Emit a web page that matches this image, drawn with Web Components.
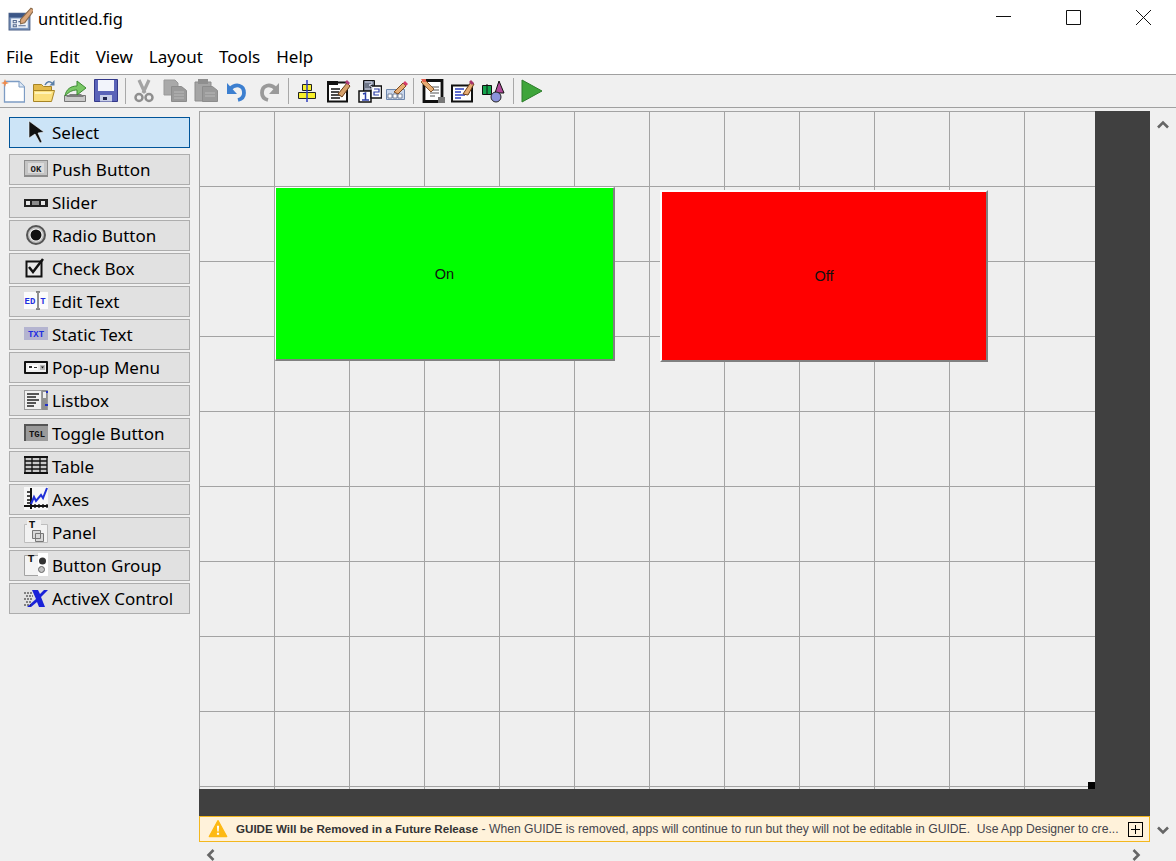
<!DOCTYPE html>
<html>
<head>
<meta charset="utf-8">
<title>untitled.fig</title>
<style>
  html, body { margin: 0; height: 100%; overflow: hidden; background: #f0f0f0; }
</style>
</head>
<body>
<guide-app></guide-app>

<script>
// every icon is a 24x24 svg body, drawn from the zoomed reference
const ICONS = {
  // toolbar
  new: `<path d="M3.500 2.500H18l5.500 5.500v15H3.500z" fill="#fff" stroke="#7d9cc4" stroke-width="1.300"/><path d="M18 2.500V8h5.500" fill="#dfe9f5" stroke="#7d9cc4"/><path d="M4 0l1 3 3 1-3 1-1 3-1-3-3-1 3-1z" fill="#f08a4b"/>`,
  open: `<path d="M1.500 5.500h8l2 2h8v5h-18z" fill="#e3b94a" stroke="#a78425"/><path d="M1.500 22.500V11.500h21l-3 11z" fill="#fbdf7c" stroke="#a78425"/><path d="M3 13h17l-1 2H3z" fill="#fff3b8"/><path d="M13 6c2-4 5-4 7-2" fill="none" stroke="#5a7fa8" stroke-width="1.500"/><path d="M22.500 1v5.500h-5z" fill="#5a7fa8"/>`,
  export: `<path d="M1.500 16.500h21v6h-21z" fill="#c9c9c9" stroke="#777"/><path d="M3 18l4-3h11l3 3z" fill="#7d7d7d"/><path d="M2 17c1-7 6-10 12-10V2l9 7-9 7v-5c-5 0-8 2-12 6z" fill="#79c765" stroke="#3d8a33"/>`,
  save: `<path d="M.5.500h23v22H.5z" fill="#5a63b8" stroke="#33388a"/><path d="M4 1h16v11H4z" fill="#f2f4fb"/><path d="M6 16h12v6.500H6z" fill="#c9cfe8"/><path d="M9 18h4v3H9z" fill="#22264f"/>`,
  cut: `<path d="M7 1l6 13M17 1l-6 13" stroke="#a3a3a3" stroke-width="3.200" fill="none"/><circle cx="7" cy="18.500" r="3.500" fill="none" stroke="#8f8f8f" stroke-width="2.500"/><circle cx="17" cy="18.500" r="3.500" fill="none" stroke="#8f8f8f" stroke-width="2.500"/>`,
  copy: `<path d="M1 1h11l3 3v12H1z" fill="#a9a9a9" stroke="#999"/><path d="M8.500 7.500h10l5 4v11h-15z" fill="#9a9a9a" stroke="#8c8c8c"/><path d="M11 13h10M11 16h10M11 19h10" stroke="#b9b9b9"/>`,
  paste: `<path d="M1 3h16v19H1z" fill="#a5a5a5" stroke="#8c8c8c"/><path d="M4 0h10v5H4z" fill="#8f8f8f"/><path d="M8.500 7.500h10l5 4v11h-15z" fill="#9a9a9a" stroke="#8c8c8c"/><path d="M11 14h10M11 17h10" stroke="#b9b9b9"/>`,
  undo: `<path d="M5 10c6-6 14-4 14 4 0 3-2 6-6 7" fill="none" stroke="#3c7fd0" stroke-width="3.800"/><path d="M2 4v11h10z" fill="#3c7fd0"/>`,
  redo: `<path d="M19 10c-6-6-14-4-14 4 0 3 2 6 6 7" fill="none" stroke="#9a9a9a" stroke-width="3.800"/><path d="M22 4v11H12z" fill="#9a9a9a"/>`,
  align: `<path d="M7.500 5.500h9v6h-9zM3.500 13.500h17v6h-17z" fill="#f7ef2a" stroke="#222"/><path d="M12 1v22" stroke="#2f3fc0" stroke-width="1.500"/>`,
  menued: `<path d="M1 3.500h19v19H1z" fill="#fff" stroke="#111" stroke-width="2"/><path d="M0 2h11v4H0z" fill="#111"/><path d="M4 10h9M4 13h8M4 16h12M4 19h9" stroke="#111" stroke-width="1.300"/><path d="M11 15l9-11 3 3-8 11z" fill="#d7a26c" stroke="#6b3d16"/><path d="M20 1l3 3-2 2-3-3z" fill="#b03a7a"/>`,
  taborder: `<path d="M5.500 1.500h11v11h-11z" fill="#6e7687" stroke="#111"/><path d="M1 12h12v11H1z" fill="#fff" stroke="#111" stroke-width="1.500"/><path d="M13 7h10.500v12H13z" fill="#fff" stroke="#111" stroke-width="1.500"/><path d="M7 3h7v2l-3 1 3 2v2H7" fill="none" stroke="#d8dcf0"/><path d="M5 15l2.500-1v7M4 21h7" fill="none" stroke="#2c3fa8" stroke-width="1.500"/><path d="M16 10h5v3h-5v3h5" fill="none" stroke="#2c3fa8" stroke-width="1.200"/>`,
  tooled: `<path d="M1.500 10.500h18v10h-18z" fill="#c9d6ea" stroke="#6f88ad"/><path d="M3 15h4v4H3zM8 15h4v4H8zM13 15h4v4h-4z" fill="#fff" stroke="#4d5e7c" stroke-width=".7"/><path d="M9 13L18 4l3 3-8 8z" fill="#e6ac73" stroke="#7b4a1c"/><path d="M18 4l2-2 3 3-2 2z" fill="#d83a6c"/>`,
  mfile: `<path d="M3 1.500h18v21H3z" fill="#fff" stroke="#111" stroke-width="2.800"/><path d="M9 8h9M9 11h9M9 14h9M9 17h5" stroke="#555"/><path d="M0 3l3-3 10 10-3 3z" fill="#e6ac73" stroke="#8a5a2b"/><path d="M0 0h5v3H2z" fill="#e5614e"/><path d="M17 18h7v6h-7z" fill="#777"/>`,
  propins: `<path d="M1 6.500h20v16H1z" fill="#fff" stroke="#111" stroke-width="2"/><path d="M4 10h9M4 13h6M4 16h10M4 19h6" stroke="#2c3fc0" stroke-width="1.500"/><path d="M12 15l8-12 3 2-6 11z" fill="#e6ac73" stroke="#6b3d16"/><path d="M20 1l3 3-2 2-3-3z" fill="#a8356c"/>`,
  objbrowse: `<path d="M1.500 6.500h9v9h-9z" fill="#14a44c" stroke="#111"/><path d="M6 5v11" stroke="#111"/><path d="M18 2l5 12h-9z" fill="#b04a9a" stroke="#111"/><circle cx="15" cy="18" r="5" fill="#8b93dc" stroke="#222"/>`,
  run: `<path d="M2 1l20 11L2 23z" fill="#3ea53a" stroke="#2c7d2a"/>`,

  // palette
  select: `<path d="M5 1v17l6-4 5 9 2-1-4-9 6-1z" fill="#111" stroke="#f4f8fc" stroke-width=".6"/>`,
  push: `<path d="M0 3h24v17H0z" fill="#8c8c8c"/><path d="M1 4h22v14H1z" fill="#c4c4c4"/><path d="M4 6h16v10H4z" fill="#dcdcdc"/><text x="12" y="14.500" class="gl" fill="#222">OK</text>`,
  slider: `<path d="M0 9h24v8H0z" fill="#222"/><path d="M2 11h4v4H2zM17 11h4v4h-4z" fill="#e8e8e8"/><path d="M8 11h7v4H8z" fill="#8c8c8c"/>`,
  radio: `<circle cx="12" cy="12" r="9" fill="#bdbdbd" stroke="#555" stroke-width="2"/><circle cx="12" cy="12" r="6.500" fill="#fff"/><circle cx="12" cy="12" r="5.500" fill="#111"/>`,
  check: `<path d="M2.500 5.500h15v15h-15z" fill="#e8e8e8" stroke="#111" stroke-width="2"/><path d="M5 11l4 5 10-13" fill="none" stroke="#111" stroke-width="2.500"/>`,
  edit: `<path d="M0 3h24v17H0z" fill="#fbfbfb"/><text x="6" y="15" class="gl" fill="#1f2fe0">ED</text><text x="19" y="15" class="gl" fill="#1f2fe0">T</text><path d="M14 4v15M12 3h4M12 20h4" stroke="#222"/>`,
  static: `<path d="M0 5h24v13H0z" fill="#b4b4d0"/><text x="12" y="15" class="gl" fill="#1f2fe0">TXT</text>`,
  popup: `<path d="M1 7h22v11H1z" fill="#efefef" stroke="#111" stroke-width="2" stroke-linejoin="round"/><path d="M4 10h10v5H4z" fill="#fff"/><path d="M5 11h3v2H5zM10 12h3v1h-3z" fill="#333"/><path d="M16 10h5v5h-5z" fill="#bbb"/><path d="M17 11.500h3l-1.500 2z" fill="#111"/>`,
  listbox: `<path d="M0 2h24v20H0z" fill="#9c9c9c"/><path d="M1 3h16v18H1z" fill="#f1f1f1"/><path d="M3 6h12M3 9h9M3 12h12M3 15h9M3 18h7" stroke="#222" stroke-width="1.500"/><path d="M18 2h5v20h-5z" fill="#8f8f8f"/><path d="M19 4h3v6h-3z" fill="#eee"/><path d="M22 3h2v2h-2zM21 16h3v2h-3z" fill="#2030c8"/>`,
  toggle: `<path d="M0 3h24v17H0z" fill="#555"/><path d="M2 5h22v15H2z" fill="#9a9a9a"/><text x="13" y="15.500" class="gl" fill="#111">TGL</text>`,
  table: `<path d="M.5 2.500h23v16H.5z" fill="#c9c9c9"/><path d="M1 3h22v16H1zM1 7h22M1 11h22M1 15h22M8 3v16M16 3v16" fill="none" stroke="#111" stroke-width="1.300"/><path d="M0 2h24v2H0zM0 18h24v2H0z" fill="#111"/>`,
  axes: `<path d="M0 0h24v23H0z" fill="#f7f7f7"/><path d="M3 5h5M3 9h5M3 13h5M3 16h5M11 17v4M15 17v4M19 17v4M23 17v4" stroke="#111" stroke-width="1.300" fill="none"/><path d="M6 1h2v21H6zM0 18h24v2H0z" fill="#111"/><path d="M7 17l3-7 2 4 5-6 2 3 4-10" fill="none" stroke="#2030d8" stroke-width="2"/>`,
  panel: `<path d="M.5 4.500h23v18H.5z" fill="#f2f2f2" stroke="#bdbdbd"/><path d="M3 0h14v8H3z" fill="#f0f0f0"/><text x="8" y="8" class="gl big" fill="#111">T</text><path d="M8.500 10.500h8v8h-8zM11.500 13.500h8v8h-8z" fill="#d8d8d8" stroke="#777"/>`,
  group: `<path d="M.5 2.500h23v20H.5z" fill="#f4f4f4" stroke="#a3a3a3"/><path d="M14 0h10v23H14z" fill="#fff"/><text x="7" y="9" class="gl big" fill="#111">T</text><circle cx="18.500" cy="8" r="3.500" fill="#333"/><circle cx="17.500" cy="16.500" r="3" fill="#c4c4c4" stroke="#666"/>`,
  activex: `<path d="M8 4h6l2 4 4-4h4l-7 7 4 10h-6l-2-5-6 5H3l9-8z" fill="#1a22d8"/><path d="M0 7h8M2 10h7M0 13h8M2 16h6M0 19h7" stroke="#222" stroke-dasharray="2 1"/>`,

  // warning triangle and the title bar picture
  warn: `<path d="M12 2l10.500 19h-21z" fill="#fdb913" stroke="#fdb913" stroke-linejoin="round" stroke-width="1.500"/><path d="M10.700 8h2.600l-.5 7h-1.600zM10.700 16.500h2.600v2.500h-2.600z" fill="#fff"/>`,
  figure: `<path d="M1 7h20v16H1z" fill="#7c97bf" stroke="#4a5f85"/><path d="M3 12h16v9H3z" fill="#eef2f8"/><path d="M5 14h3v2H5zM5 18h3v2H5zM10 15h7M10 19h7" stroke="#54698f" fill="none"/><path d="M1 7h20v4H1z" fill="#3c5787"/><path d="M12 13L22 2l3 2-9 12-4 1z" fill="#d9a57a" stroke="#8a6a4a"/>`
};

function svgIcon(name, w = 24, h = 24) {
  return `<svg width="${w}" height="${h}" viewBox="0 0 24 24" aria-hidden="true">
    <style>.gl{font:bold 9px "Liberation Mono",monospace;text-anchor:middle}.big{font-size:11px}</style>
    ${ICONS[name]}</svg>`;
}

class TitleBar extends HTMLElement {
  constructor() {
    super();
    this.attachShadow({ mode: 'open' });
  }
  connectedCallback() {
    this.shadowRoot.innerHTML = `
    <style>
      :host { display: flex; align-items: center; height: 39px; background: #fff; color: #000;
              font: 16.500px "Noto Sans", sans-serif; }
      .pic { margin-left: 8px; width: 25px; height: 25px; margin-top: -3px; }
      .name { margin-left: 5px; margin-top: -2px; }
      .ctl { margin-left: auto; display: flex; gap: 55px; padding-right: 25px; margin-top: -4px; }
      .ctl svg { display: block; }
    </style>
    <span class="pic">${svgIcon('figure', 25, 25)}</span>
    <span class="name"><slot></slot></span>
    <div class="ctl">
      <svg width="15" height="15"><path d="M0 6.500h15" stroke="#111"/></svg>
      <svg width="15" height="15"><path d="M.5.500h14v14H.5z" fill="none" stroke="#111"/></svg>
      <svg width="15" height="15"><path d="M0 0l15 15M15 0L0 15" stroke="#111"/></svg>
    </div>`;
  }
}

class MenuBar extends HTMLElement {
  constructor() {
    super();
    this.attachShadow({ mode: 'open' });
  }
  connectedCallback() {
    this.shadowRoot.innerHTML = `
    <style>
      :host { display: flex; height: 36px; align-items: center; gap: 16px; padding-left: 6px; box-sizing: border-box;
              background: #fff; border-bottom: 1px solid #a0a0a0; color: #000;
              font: 17px "Noto Sans", sans-serif; }
      ::slotted(span) { display: block; }
    </style>
    <slot></slot>`;
  }
}

class ToolBar extends HTMLElement {
  constructor() {
    super();
    this.attachShadow({ mode: 'open' });
  }
  connectedCallback() {
    // [icon, left margin], or just a number for a separator with that left margin
    const items = [['new', 1], ['open', 7], ['export', 7], ['save', 7], 7, ['cut', 6], ['copy', 7], ['paste', 7],
      ['undo', 7], ['redo', 8], 7, ['align', 6], ['menued', 8], ['taborder', 7], ['tooled', 3], 4,
      ['mfile', 7], ['propins', 6], ['objbrowse', 6], 8, ['run', 6]];
    const html = items.map(i => Array.isArray(i)
      ? `<span style="margin-left:${i[1]}px">${svgIcon(i[0])}</span>`
      : `<i style="margin-left:${i}px"></i>`).join('');
    this.shadowRoot.innerHTML = `
    <style>
      :host { display: flex; height: 33px; align-items: center; box-sizing: border-box;
              background: #f0f0f0; border-bottom: 1px solid #a0a0a0; }
      span { display: block; height: 24px; }
      svg { display: block; }
      i { display: block; width: 1px; height: 26px; background: #a8a8a8; }
    </style>
    ${html}`;
  }
}

class PalettePanel extends HTMLElement {
  constructor() {
    super();
    this.attachShadow({ mode: 'open' });
  }
  connectedCallback() {
    this.shadowRoot.innerHTML = `
    <style>
      :host { display: flex; flex-direction: column; gap: 2px; width: 181px; padding: 9px 9px 0; flex: none;
              box-sizing: content-box; }
      ::slotted(:first-child) { margin-bottom: 4px; }
    </style>
    <slot></slot>`;
  }
}

class PaletteButton extends HTMLElement {
  constructor() {
    super();
    this.attachShadow({ mode: 'open' });
  }
  connectedCallback() {
    const on = this.hasAttribute('selected');
    this.shadowRoot.innerHTML = `
    <style>
      :host { display: flex; align-items: center; height: 31px; box-sizing: border-box; padding-left: 14px; gap: 4px;
              background: ${on ? '#cce4f7' : '#e1e1e1'}; border: 1px solid ${on ? '#005499' : '#adadad'};
              color: #000; font: 17px "Noto Sans", sans-serif; }
      span { display: block; height: 24px; margin-top: -1px; margin-bottom: 1px; }
      svg { display: block; }
      b { font-weight: normal; }
    </style>
    <span>${svgIcon(this.getAttribute('icon'))}</span><b><slot></slot></b>`;
  }
}

class LayoutCanvas extends HTMLElement {
  constructor() {
    super();
    this.attachShadow({ mode: 'open' });
  }
  connectedCallback() {
    this.shadowRoot.innerHTML = `
    <style>
      :host { display: block; position: relative; width: 896px; height: 678px; flex: none; overflow: hidden;
              background-color: #efefef;
              background-image: linear-gradient(to right, #a3a3a3 1px, transparent 1px),
                                linear-gradient(to bottom, #a3a3a3 1px, transparent 1px);
              background-size: 75px 75px; }
      .handle { position: absolute; right: 0; bottom: 0; width: 7px; height: 7px; background: #000; }
    </style>
    <slot></slot>
    <div class="handle"></div>`;
  }
}

// a push button placed on the figure, its place on the canvas comes from the attributes
class UiControl extends HTMLElement {
  constructor() {
    super();
    this.attachShadow({ mode: 'open' });
  }
  connectedCallback() {
    const g = k => this.getAttribute(k);
    const e = g('edge');
    this.shadowRoot.innerHTML = `
    <style>
      :host { position: absolute; left: ${g('x')}px; top: ${g('y')}px; width: ${g('w')}px; height: ${g('h')}px;
              display: flex; align-items: center; justify-content: center; box-sizing: border-box;
              background: ${g('color')};
              border-style: solid; border-width: ${e}px 2px 2px ${e}px;
              border-color: #fff #808080 #808080 #fff;
              color: #111; font: 14.500px "Liberation Sans", sans-serif; }
    </style>
    <slot></slot>`;
  }
}

class WarningBar extends HTMLElement {
  constructor() {
    super();
    this.attachShadow({ mode: 'open' });
  }
  connectedCallback() {
    this.shadowRoot.innerHTML = `
    <style>
      :host { display: flex; align-items: center; height: 28px; box-sizing: border-box; padding-left: 8px;
              background: #fff2da; border: 1px solid #f3b71e; color: #44444c;
              font: 12.150px "Liberation Sans", sans-serif; white-space: pre; }
      .ico { height: 20px; margin-right: 8px; }
      .ico svg { display: block; }
      .msg { flex: 1; overflow: hidden; }
      ::slotted(b) { color: #333; font-size: 11.600px; }
      .plus { width: 15px; height: 15px; box-sizing: border-box; border: 1px solid #000; margin-right: 6px; }
      .plus svg { display: block; }
    </style>
    <span class="ico">${svgIcon('warn', 20, 20)}</span>
    <span class="msg"><slot></slot></span>
    <span class="plus"><svg width="13" height="13"><path d="M2 6.500h9M6.500 2v9" stroke="#000"/></svg></span>`;
  }
}

class ScrollArrow extends HTMLElement {
  constructor() {
    super();
    this.attachShadow({ mode: 'open' });
  }
  connectedCallback() {
    const turn = { up: 0, right: 90, down: 180, left: 270 }[this.getAttribute('dir')];
    this.shadowRoot.innerHTML = `
    <style>
      :host { display: block; width: 12px; height: 12px; }
      svg { display: block; transform: rotate(${turn}deg); }
    </style>
    <svg width="12" height="12" viewBox="0 0 12 12"><path d="M1 8.500L6 3.500l5 5" fill="none" stroke="#666" stroke-width="2.600"/></svg>`;
  }
}

class GuideApp extends HTMLElement {
  constructor() {
    super();
    this.attachShadow({ mode: 'open' });
  }
  connectedCallback() {
    const palette = [['push', 'Push Button'], ['slider', 'Slider'], ['radio', 'Radio Button'], ['check', 'Check Box'],
      ['edit', 'Edit Text'], ['static', 'Static Text'], ['popup', 'Pop-up Menu'], ['listbox', 'Listbox'],
      ['toggle', 'Toggle Button'], ['table', 'Table'], ['axes', 'Axes'], ['panel', 'Panel'],
      ['group', 'Button Group'], ['activex', 'ActiveX Control']];
    this.shadowRoot.innerHTML = `
    <style>
      :host { display: flex; flex-direction: column; width: 1176px; height: 861px; overflow: hidden; background: #f0f0f0; }
      .work { display: flex; flex: 1; min-height: 0; }
      .center { width: 951px; flex: none; padding-top: 3px; display: flex; flex-direction: column; }
      .figure { display: flex; height: 678px; background: #404040; flex: none; }
      .strip { height: 27px; background: #404040; flex: none; }
      .hscroll { display: flex; justify-content: space-between; padding: 7px 8px 0 6px; }
      .vscroll { width: 26px; flex: none; display: flex; flex-direction: column; justify-content: space-between;
                 align-items: center; padding: 11px 0 25px; box-sizing: border-box; }
    </style>
    <title-bar>untitled.fig</title-bar>
    <menu-bar><span>File</span><span>Edit</span><span>View</span><span>Layout</span><span>Tools</span><span>Help</span></menu-bar>
    <tool-bar></tool-bar>
    <div class="work">
      <palette-panel>
        <palette-button icon="select" selected>Select</palette-button>
        ${palette.map(p => `<palette-button icon="${p[0]}">${p[1]}</palette-button>`).join('')}
      </palette-panel>
      <div class="center">
        <div class="figure">
          <layout-canvas>
            <ui-control x="76" y="76" w="340" h="174" edge="1" color="#00ff00">On</ui-control>
            <ui-control x="461" y="79" w="328" h="172" edge="2" color="#ff0000">Off</ui-control>
          </layout-canvas>
        </div>
        <div class="strip"></div>
        <warning-bar><b>GUIDE Will be Removed in a Future Release</b> - When GUIDE is removed, apps will continue to run but they will not be editable in GUIDE.  Use App Designer to cre...</warning-bar>
        <div class="hscroll"><scroll-arrow dir="left"></scroll-arrow><scroll-arrow dir="right"></scroll-arrow></div>
      </div>
      <div class="vscroll"><scroll-arrow dir="up"></scroll-arrow><scroll-arrow dir="down"></scroll-arrow></div>
    </div>`;
  }
}

customElements.define('title-bar', TitleBar);
customElements.define('menu-bar', MenuBar);
customElements.define('tool-bar', ToolBar);
customElements.define('palette-panel', PalettePanel);
customElements.define('palette-button', PaletteButton);
customElements.define('layout-canvas', LayoutCanvas);
customElements.define('ui-control', UiControl);
customElements.define('warning-bar', WarningBar);
customElements.define('scroll-arrow', ScrollArrow);
customElements.define('guide-app', GuideApp);
</script>
</body>
</html>
